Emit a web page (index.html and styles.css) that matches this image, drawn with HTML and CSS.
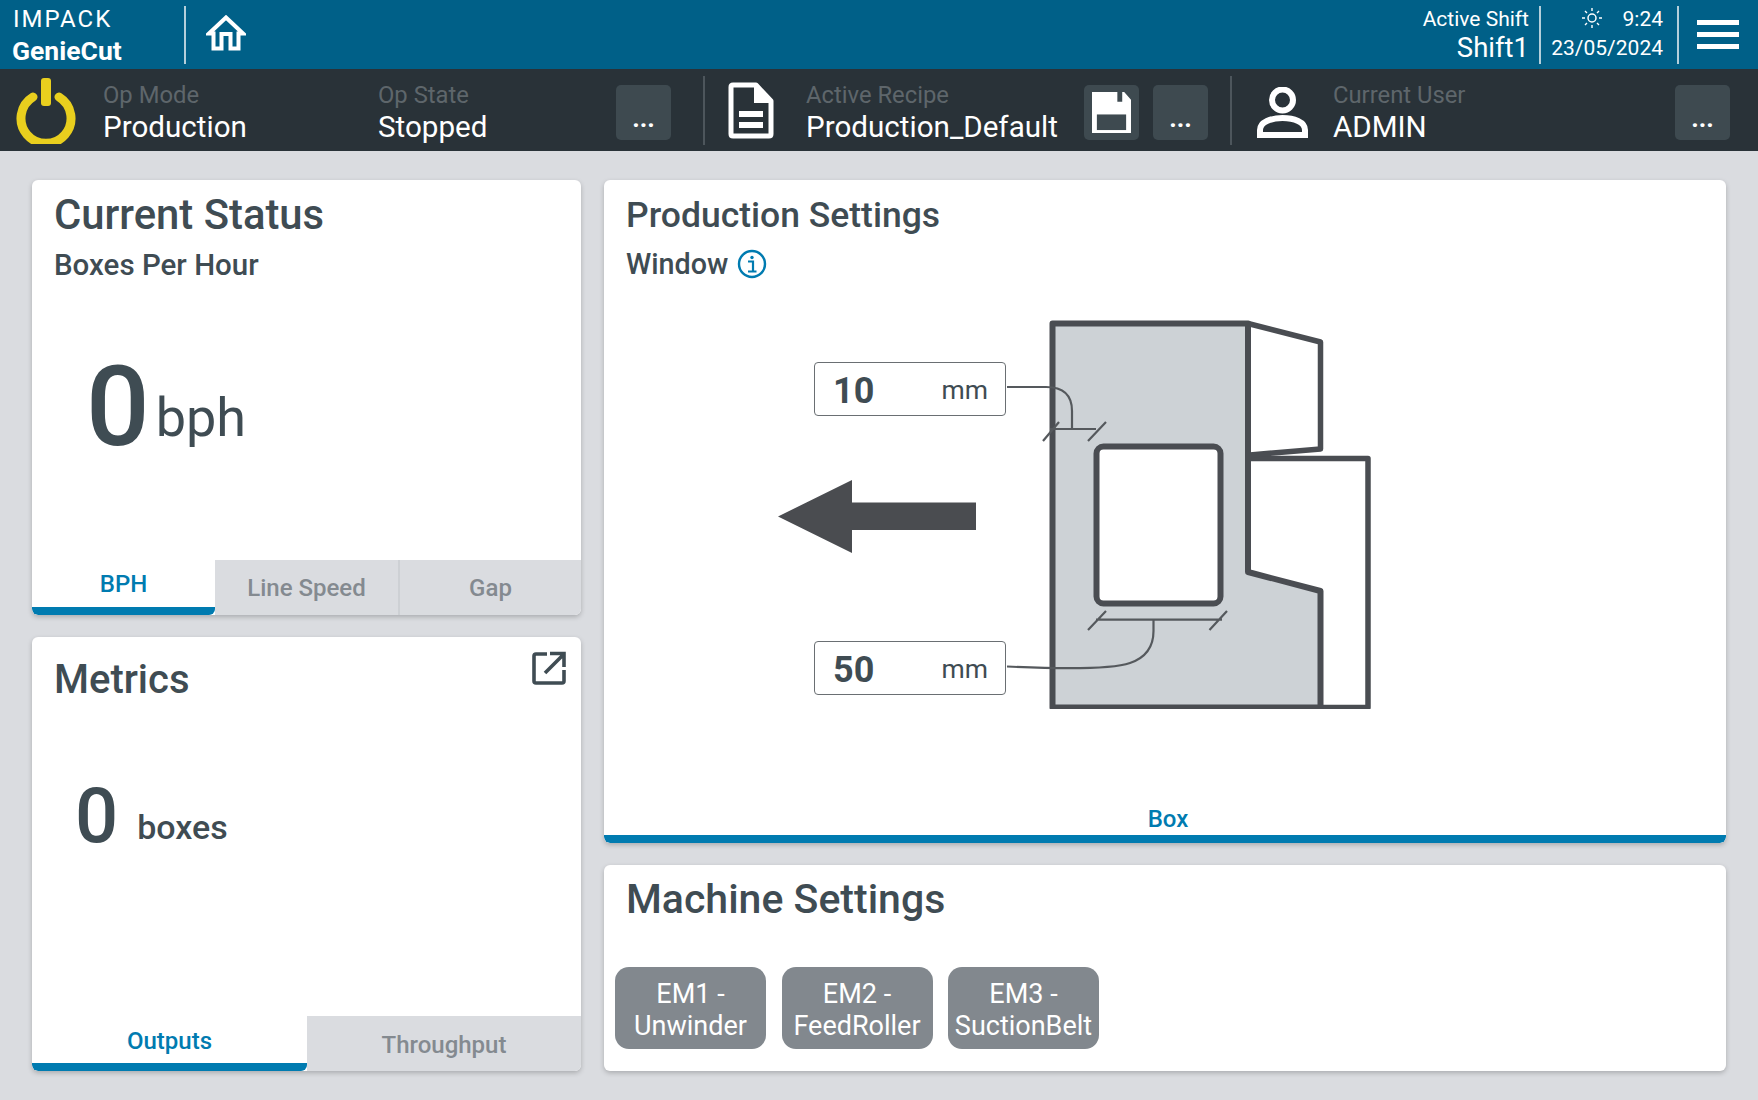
FILE: index.html
```html
<!DOCTYPE html>
<html lang="en">
<head>
<meta charset="utf-8">
<title>GenieCut</title>
<link rel="stylesheet" href="styles.css">
</head>
<body>
<header class="topbar">
  <div class="brand">
    <div class="brand-top">IMPACK</div>
    <div class="brand-name">GenieCut</div>
  </div>
  <div class="top-div"></div>
  <svg class="home" viewBox="0 0 40 36"><path d="M20 2.500 L37 18.500 H32.500 V33.500 H24.500 V19 H15.500 V33.500 H7.500 V18.500 H3 Z" fill="none" stroke="#fff" stroke-width="4" stroke-linejoin="miter"/></svg>
  <div class="spacer"></div>
  <div class="shift">
    <div class="shift-l">Active Shift</div>
    <div class="shift-v">Shift1</div>
  </div>
  <div class="top-div div-a"></div>
  <div class="clock">
    <div class="clock-row">
      <svg class="sun" viewBox="0 0 20 20"><circle cx="10" cy="10" r="4" fill="none" stroke="#fff" stroke-width="1.500"/><path d="M10 0v3M10 17v3M0 10h3M17 10h3M3 3l2 2M15 15l2 2M3 17l2-2M15 5l2-2" stroke="#fff" stroke-width="1.400"/></svg>
      <span class="time">9:24</span>
    </div>
    <div class="date">23/05/2024</div>
  </div>
  <div class="top-div"></div>
  <div class="burger"><i></i><i></i><i></i></div>
</header>

<section class="statusbar">
  <svg class="power" viewBox="0 0 60 66"><path d="M17 19 A25 25 0 1 0 43 19" fill="none" stroke="#e9cf1e" stroke-width="9" stroke-linecap="round"/><rect x="25" y="0" width="10" height="28" rx="3" fill="#e9cf1e"/></svg>
  <div class="info w-mode"><div class="lbl">Op Mode</div><div class="val">Production</div></div>
  <div class="info w-state"><div class="lbl">Op State</div><div class="val">Stopped</div></div>
  <button class="sq dots">...</button>
  <div class="sep s-a"></div>
  <svg class="file" viewBox="0 0 46 57"><path d="M5 3 H28 L43 19 V52 Q43 54 41 54 H5 Q3 54 3 52 V5 Q3 3 5 3 Z" fill="none" stroke="#fff" stroke-width="5" stroke-linejoin="round"/><path d="M26 3 L44 21 H26 Z" fill="#fff"/><rect x="11" y="29" width="24" height="6" fill="#fff"/><rect x="11" y="40" width="24" height="6" fill="#fff"/></svg>
  <div class="info w-recipe"><div class="lbl">Active Recipe</div><div class="val">Production_Default</div></div>
  <button class="sq b-save"><svg viewBox="0 0 40 42"><path d="M0 0 H26 V10 H31 V0 H33 L40 8 V42 H0 Z" fill="#fff"/><rect x="5" y="23" width="30" height="16" fill="#3e4a50"/></svg></button>
  <button class="sq dots b-b">...</button>
  <div class="sep s-b"></div>
  <svg class="user" viewBox="0 0 51 51"><circle cx="25.500" cy="13" r="10.500" fill="none" stroke="#fff" stroke-width="6"/><path d="M3 48 V43 C3 35 14 31 25.500 31 C37 31 48 35 48 43 V48 Z" fill="none" stroke="#fff" stroke-width="6"/></svg>
  <div class="info w-user"><div class="lbl">Current User</div><div class="val">ADMIN</div></div>
  <button class="sq dots">...</button>
</section>

<main class="content">
  <div class="col-left">
    <article class="card">
      <h2 class="h-status">Current Status</h2>
      <h3 class="sub">Boxes Per Hour</h3>
      <div class="bph"><span class="bph-n">0</span><span class="bph-u">bph</span></div>
      <div class="tabs">
        <div class="tab active t3">BPH</div>
        <div class="tab t3">Line Speed</div>
        <div class="tab t3">Gap</div>
      </div>
    </article>
    <article class="card">
      <div class="metrics-head">
        <h2 class="h-metrics">Metrics</h2>
        <svg class="ext" viewBox="0 0 34 34"><path d="M15 3 H4 Q2 3 2 5 V30 Q2 32 4 32 H30 Q32 32 32 30 V19" fill="none" stroke="#3f4c53" stroke-width="3.600"/><path d="M13 22 L31 4 M18 2.500 H32 V16" fill="none" stroke="#3f4c53" stroke-width="3.600"/></svg>
      </div>
      <div class="boxes"><span class="boxes-n">0</span><span class="boxes-u">boxes</span></div>
      <div class="tabs">
        <div class="tab active t-out">Outputs</div>
        <div class="tab t-thr">Throughput</div>
      </div>
    </article>
  </div>
  <div class="col-right">
    <article class="card">
      <h2 class="h-prod">Production Settings</h2>
      <div class="sub-row">
        <h3 class="sub sub-win">Window</h3>
        <svg class="i-icon" viewBox="0 0 30 30"><circle cx="15" cy="15" r="13" fill="none" stroke="#007bb0" stroke-width="2.400"/><circle cx="15" cy="8.500" r="1.700" fill="#007bb0"/><path d="M11 12.500 H16 V22 M11 22.500 H19.500" fill="none" stroke="#007bb0" stroke-width="2.200"/></svg>
      </div>
      <div class="diagram">
        <svg class="drawing" viewBox="770 310 610 400">
          <path d="M1250 459.500 H1368 V708.500 H1320.500" fill="#fff" stroke="#4a4d52" stroke-width="5.500" stroke-linejoin="round"/>
          <path d="M1248 324.500 L1320.500 343 V450 L1250 456" fill="#fff" stroke="#4a4d52" stroke-width="5.500" stroke-linejoin="round"/>
          <path d="M1052.500 324.500 H1248 V573 L1320.500 592 V708.500 H1052.500 Z" fill="#cdd2d6" stroke="#4a4d52" stroke-width="6" stroke-linejoin="round"/>
          <rect x="1096.500" y="447.500" width="124" height="157" rx="7" fill="#fff" stroke="#4a4d52" stroke-width="6"/>
          <path d="M1007 388 H1046 Q1072 388 1072 412 V430 M1050 430 H1096 M1043 442 L1059 423 M1088 442 L1106 423" fill="none" stroke="#55595d" stroke-width="2.200"/>
          <path d="M1007 667.500 C1060 670 1110 671 1130 664 Q1153.500 656 1153.500 632 V620.700 M1096 620.700 H1222 M1088 631 L1106 612 M1209.500 631 L1227 612" fill="none" stroke="#55595d" stroke-width="2.200"/>
          <path d="M778 517.500 L852 481 V503.500 H976 V531 H852 V554 Z" fill="#4a4c50"/>
        </svg>
        <div class="field f-top"><span class="f-v">10</span><span class="f-u">mm</span></div>
        <div class="field f-bot"><span class="f-v">50</span><span class="f-u">mm</span></div>
      </div>
      <div class="tabs tabs-box">
        <div class="tab active t-box">Box</div>
      </div>
    </article>
    <article class="card">
      <h2 class="h-mach">Machine Settings</h2>
      <div class="em-row">
        <button class="em">EM1 -<br>Unwinder</button>
        <button class="em">EM2 -<br>FeedRoller</button>
        <button class="em">EM3 -<br>SuctionBelt</button>
      </div>
    </article>
  </div>
</main>
</body>
</html>
```
FILE: styles.css
```css
* { box-sizing: border-box; }
html, body { margin: 0; height: 100%; }
body {
  width: 1758px; height: 1100px; overflow: hidden;
  background: #dadce0;
  font-family: "Roboto", "Liberation Sans", sans-serif;
  color: #3f4c53;
}
h2, h3 { margin: 0; font-weight: 500; }

.topbar { height: 69px; background: #006088; color: #fff; display: flex; align-items: center; }
.brand { width: 184px; padding: 3px 0 0 12px; }
.brand-top { font-size: 24px; line-height: 25px; font-weight: 400; letter-spacing: 2px; margin-bottom: 4px; padding-left: 1px; }
.brand-name { font-size: 26.500px; line-height: 29px; font-weight: 700; }
.top-div { width: 2px; height: 58px; background: #b4cfdb; flex: none; }
.home { width: 40px; height: 36px; margin: -3px 0 0 20px; }
.spacer { flex: 1; }
.shift { text-align: right; }
.shift-l { font-size: 21px; line-height: 26px; }
.shift-v { font-size: 27.500px; line-height: 32px; }
.div-a { margin-left: 10px; }
.clock { width: 136px; padding-right: 14px; text-align: right; font-size: 21px; }
.clock-row { display: flex; align-items: center; justify-content: flex-end; line-height: 27px; }
.sun { width: 20px; height: 20px; margin-right: 21px; margin-top: -4px; }
.date { line-height: 30px; }
.burger { width: 42px; margin: 0 19px 0 18px; display: flex; flex-direction: column; gap: 7px; }
.burger i { display: block; height: 5px; background: #fff; }

.statusbar { height: 82px; background: #293238; display: flex; align-items: center; color: #fff; }
.power { width: 60px; height: 66px; margin: 1px 0 0 16px; flex: none; }
.info { flex: none; margin-top: 4px; }
.lbl { font-size: 23.800px; line-height: 29px; color: #5e666b; }
.val { font-size: 29.600px; line-height: 34px; color: #fff; }
.w-mode { margin-left: 27px; width: 275px; }
.w-state { width: 238px; }
.sq {
  width: 55px; height: 55px; flex: none; border: 0; border-radius: 5px; background: #3e4a50;
  color: #fff; font: 700 26px/26px "Roboto", sans-serif; padding: 0; margin-top: 5px;
  display: flex; align-items: center; justify-content: center;
}
.dots { padding-top: 10px; }
.b-save svg { width: 39px; height: 41px; }
.sep { width: 2px; height: 69px; background: #4d565c; flex: none; }
.s-a { margin-left: 32px; }
.file { width: 46px; height: 57px; margin-left: 23px; flex: none; }
.w-recipe { margin-left: 32px; width: 278px; }
.b-b { margin-left: 14px; }
.s-b { margin-left: 22px; }
.user { width: 51px; height: 51px; margin: 5px 0 0 25px; flex: none; }
.w-user { margin-left: 25px; width: 342px; }

.content { height: 949px; padding: 29px 32px; display: grid; grid-template-columns: 549px 1122px; column-gap: 23px; }
.col-left { display: grid; grid-template-rows: 435px 434px; row-gap: 22px; }
.col-right { display: grid; grid-template-rows: 663px 206px; row-gap: 22px; }
.card { background: #fff; border-radius: 6px; box-shadow: 0 2px 5px rgba(0,0,0,.22); display: flex; flex-direction: column; overflow: hidden; }

.h-status { font-size: 41.800px; line-height: 48px; padding: 11px 0 0 22px; }
.sub { font-size: 29.500px; line-height: 36px; }
.card > .sub { padding: 8px 0 0 22px; }
.bph { padding: 69px 0 0 54px; line-height: 110px; white-space: nowrap; }
.bph-n { font-size: 112px; font-weight: 500; }
.bph-u { font-size: 54px; margin-left: 6px; font-weight: 400; vertical-align: 9px; }

.tabs { margin-top: auto; display: flex; height: 55px; flex: none; }
.tab { display: flex; align-items: center; justify-content: center; background: #dadce0; color: #848a90; font-size: 24px; font-weight: 500; }
.tab.active { background: #fff; color: #007bb0; border-bottom: 8px solid #007bb0; border-radius: 0 0 6px 6px; }
.tab.t3 { width: 183px; }
.tab.t3 + .tab.t3 + .tab.t3 { border-left: 2px solid #cdd0d4; }
.t-out { width: 275px; padding-top: 2px; }
.t-thr { flex: 1; padding-top: 2px; }
.metrics-head { display: flex; justify-content: space-between; padding: 18px 15px 0 22px; height: 110px; }
.ext { width: 34px; height: 34px; margin-top: -4px; }
.h-metrics { font-size: 40px; line-height: 50px; }
.boxes { padding: 24px 0 0 43px; line-height: 90px; white-space: nowrap; }
.boxes-n { font-size: 76px; font-weight: 500; }
.boxes-u { font-size: 34px; margin-left: 19px; font-weight: 500; vertical-align: 3px; }

.h-prod { font-size: 35.500px; line-height: 42px; padding: 14px 0 0 22px; }
.sub-row { display: flex; align-items: center; padding: 10px 0 0 22px; gap: 9px; }
.sub-win { font-size: 28.700px; }
.i-icon { width: 30px; height: 30px; }
.diagram { position: relative; width: 610px; height: 400px; margin: 27px 0 0 166px; }
.drawing { width: 610px; height: 400px; display: block; }
.field { position: absolute; left: 44px; width: 192px; height: 54px; background: #fff; border: 1.500px solid #6a6f73; border-radius: 4px; display: flex; align-items: center; justify-content: space-between; padding: 4px 17px 0 18px; }
.f-top { top: 53px; }
.f-bot { top: 332px; }
.f-v { font-size: 36px; font-weight: 700; }
.f-u { font-size: 26.500px; margin-top: -4px; }
.t-box { width: 100%; align-items: flex-end; padding: 0 0 2px 6px; }

.h-mach { font-size: 41px; line-height: 50px; padding: 9px 0 0 22px; }
.em-row { display: flex; gap: 15.500px; padding: 43px 0 0 11px; }
.em { width: 151px; height: 82px; border: 0; border-radius: 14px; background: #82888e; color: #fff; font: 400 27px/32px "Roboto", sans-serif; padding: 3px 0 0; }
```
